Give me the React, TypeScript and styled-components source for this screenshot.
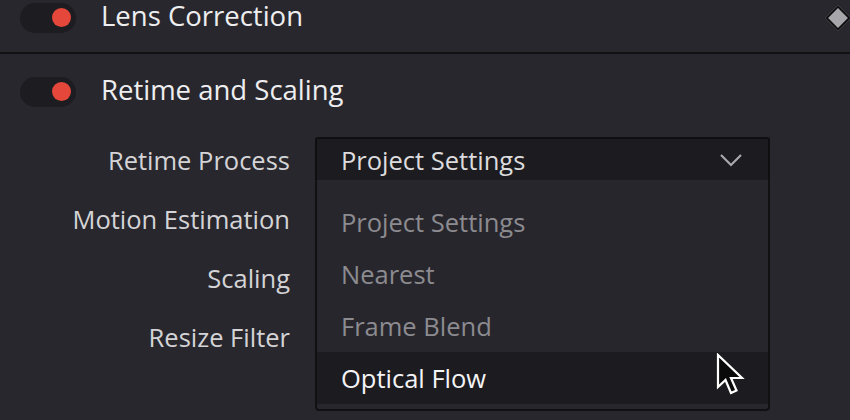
import React from "react";
import styled, { createGlobalStyle } from "styled-components";

const Global = createGlobalStyle`
  html, body {
    margin: 0;
    padding: 0;
    background: #28272d;
    font-family: "Open Sans", "Noto Sans", sans-serif;
    overflow: hidden;
  }
`;

const Panel = styled.main`
  width: 850px;
  height: 420px;
  background: #28272d;
  color: #e6e6e8;
`;

const Section = styled.section<{ $divider?: boolean }>`
  padding-bottom: ${(p) => (p.$divider ? "17px" : "0")};
  border-bottom: ${(p) => (p.$divider ? "2px solid #121114" : "none")};
`;

const HeaderRow = styled.div<{ $top?: number }>`
  display: flex;
  align-items: center;
  height: 35px;
  margin-top: ${(p) => p.$top ?? 0}px;
  padding-left: 20px;
`;

const Toggle = styled.div`
  width: 56px;
  height: 30px;
  border-radius: 15px;
  background: #1d1c21;
  display: flex;
  align-items: center;
  justify-content: flex-end;
  padding-right: 5px;
  box-sizing: border-box;
  margin-right: 25px;

  &::after {
    content: "";
    width: 19px;
    height: 19px;
    border-radius: 50%;
    background: #e5483a;
  }
`;

const Title = styled.span`
  font-size: 27.5px;
  line-height: 1;
  margin-bottom: 3px;
  color: #eeeef0;
`;

const Keyframe = styled.div`
  margin-left: auto;
  margin-right: 3px;
  width: 14px;
  height: 14px;
  background: #a7a6ab;
  border: 2px solid #101012;
  transform: rotate(45deg);
`;

const Form = styled.div`
  display: grid;
  grid-template-columns: 290px 455px;
  column-gap: 25px;
  row-gap: 14px;
  grid-auto-rows: 45px;
  margin-top: 28px;
`;

const Label = styled.div`
  display: flex;
  align-items: center;
  justify-content: flex-end;
  font-size: 25.5px;
  color: #d4d4d7;
`;

const Select = styled.div`
  position: relative;
  display: flex;
  align-items: center;
  padding: 0 24px;
  background: #1c1b1f;
  border: 2px solid #0f0f11;
  border-radius: 3px;
  font-size: 25.5px;
  color: #dcdcde;
  box-sizing: border-box;
`;

const Chevron = styled.svg`
  margin-left: auto;
`;

const Menu = styled.ul`
  position: absolute;
  left: -2px;
  right: -2px;
  top: 100%;
  height: 231px;
  margin: 0;
  padding: 16px 0 0;
  list-style: none;
  background: #27262c;
  border: 2px solid #111013;
  border-top: none;
  border-radius: 0 0 4px 4px;
  box-sizing: border-box;
  z-index: 2;
`;

const Item = styled.li<{ $active?: boolean }>`
  position: relative;
  height: 52px;
  display: flex;
  align-items: center;
  padding-left: 24px;
  font-size: 25.5px;
  color: ${(p) => (p.$active ? "#f4f4f6" : "#8c8b90")};
  background: ${(p) => (p.$active ? "#1c1b1f" : "transparent")};
`;

const Cursor = styled.svg`
  position: absolute;
  left: 399px;
  top: 1px;
`;

const items = ["Project Settings", "Nearest", "Frame Blend", "Optical Flow"];

export default function App() {
  return (
    <Panel>
      <Global />
      <Section $divider>
        <HeaderRow>
          <Toggle />
          <Title>Lens Correction</Title>
          <Keyframe />
        </HeaderRow>
      </Section>
      <Section>
        <HeaderRow $top={20}>
          <Toggle />
          <Title>Retime and Scaling</Title>
        </HeaderRow>
        <Form>
          <Label>Retime Process</Label>
          <Select>
            Project Settings
            <Chevron width="26" height="16" viewBox="0 0 26 16">
              <path d="M3 3 L13 13 L23 3" fill="none" stroke="#a9a8ad" strokeWidth="2.2" />
            </Chevron>
            <Menu>
              {items.map((it, i) => (
                <Item key={it} $active={i === 3}>
                  {it}
                  {i === 3 && (
                    <Cursor width="30" height="44" viewBox="0 0 30 44">
                      <path
                        d="M2 2 L2 34 L9.5 27 L15 40 L20.5 37.5 L15 25 L26 25 Z"
                        fill="#0a0a0a"
                        stroke="#ffffff"
                        strokeWidth="2.2"
                      />
                    </Cursor>
                  )}
                </Item>
              ))}
            </Menu>
          </Select>
          <Label>Motion Estimation</Label>
          <div />
          <Label>Scaling</Label>
          <div />
          <Label>Resize Filter</Label>
          <div />
        </Form>
      </Section>
    </Panel>
  );
}
